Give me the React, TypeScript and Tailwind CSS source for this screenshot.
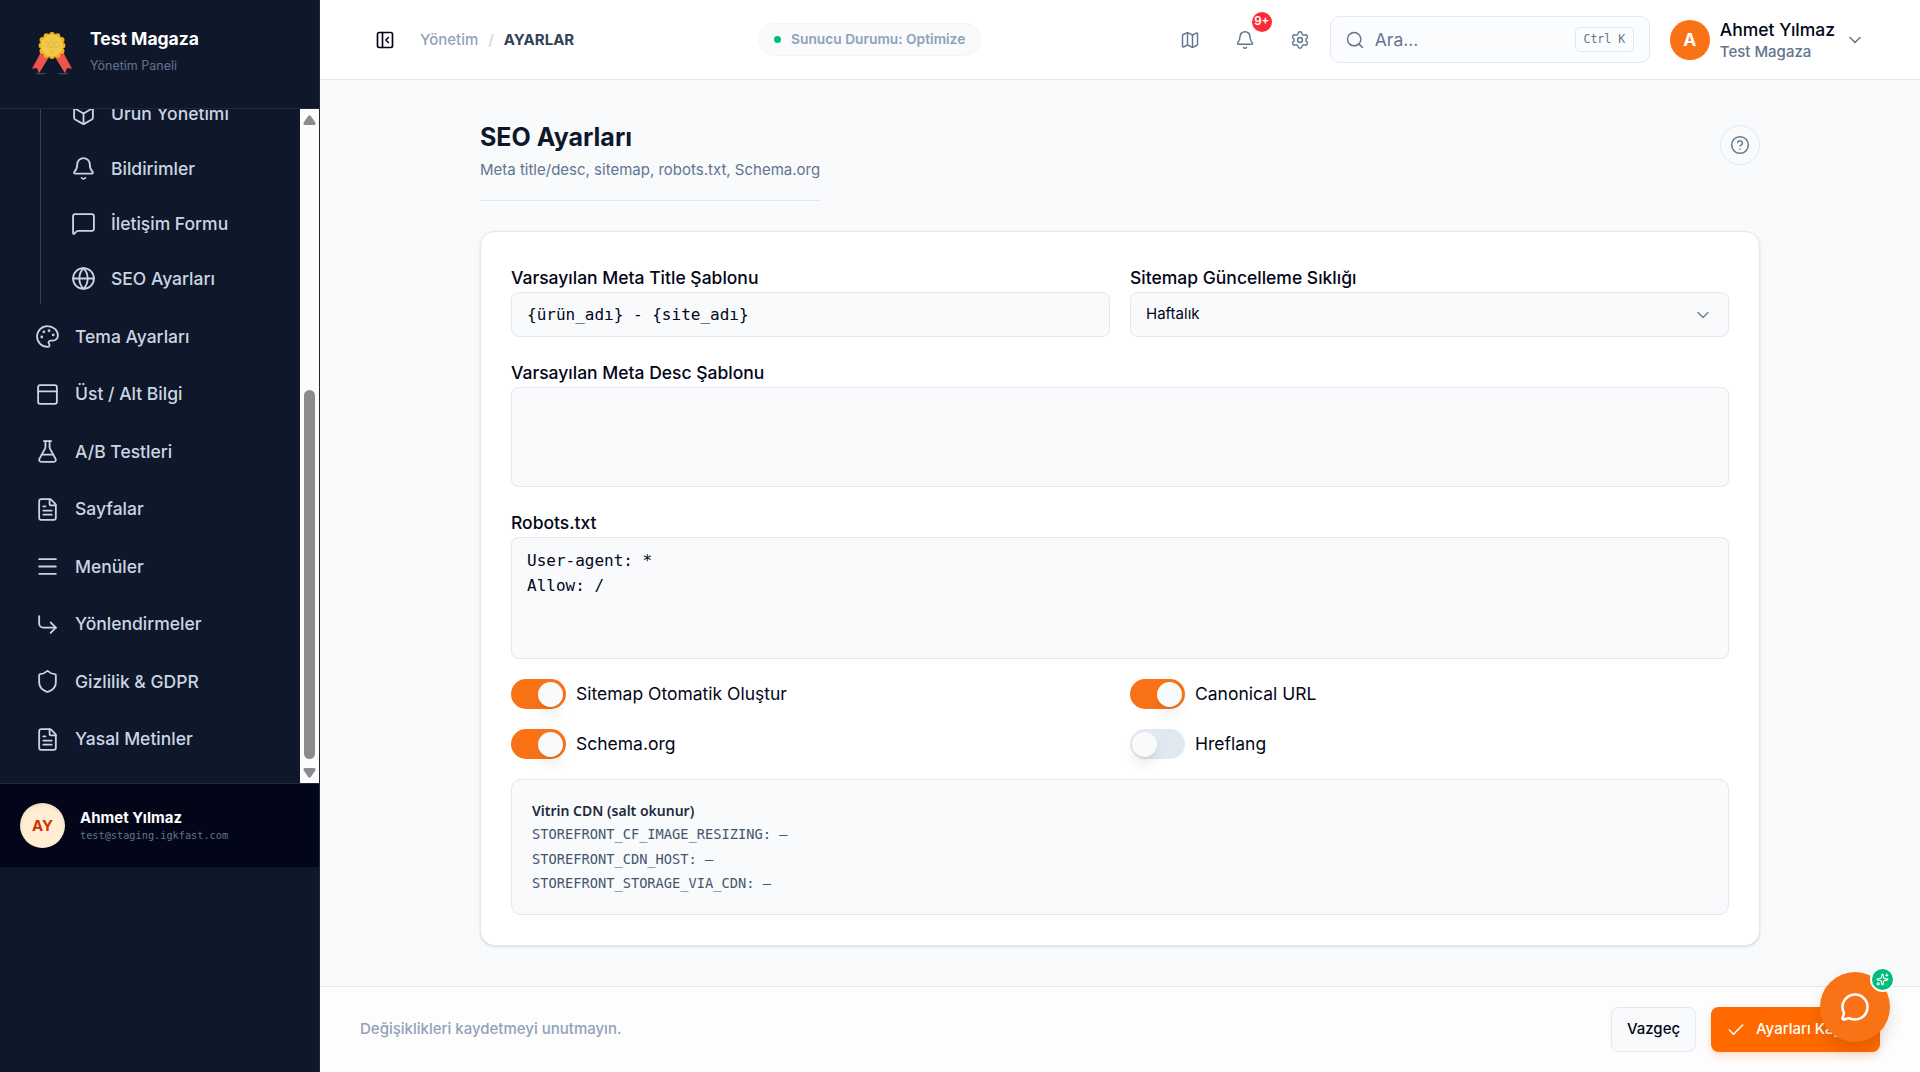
import {
  Bell,
  Box,
  Check,
  ChevronDown,
  CircleHelp,
  CornerDownRight,
  FileText,
  FlaskConical,
  Globe,
  Map,
  Menu,
  MessageCircle,
  MessageSquare,
  Palette,
  PanelLeftClose,
  PanelTop,
  Search,
  Settings,
  Shield,
  Sparkles,
  type LucideIcon,
} from "lucide-react";
import type { ReactNode } from "react";

interface NavItem {
  label: string;
  icon: LucideIcon;
}

const subItems: NavItem[] = [
  { label: "Ürün Yönetimi", icon: Box },
  { label: "Bildirimler", icon: Bell },
  { label: "İletişim Formu", icon: MessageSquare },
  { label: "SEO Ayarları", icon: Globe },
];

const mainItems: NavItem[] = [
  { label: "Tema Ayarları", icon: Palette },
  { label: "Üst / Alt Bilgi", icon: PanelTop },
  { label: "A/B Testleri", icon: FlaskConical },
  { label: "Sayfalar", icon: FileText },
  { label: "Menüler", icon: Menu },
  { label: "Yönlendirmeler", icon: CornerDownRight },
  { label: "Gizlilik & GDPR", icon: Shield },
  { label: "Yasal Metinler", icon: FileText },
];

const toggles = [
  { label: "Sitemap Otomatik Oluştur", on: true },
  { label: "Canonical URL", on: true },
  { label: "Schema.org", on: true },
  { label: "Hreflang", on: false },
];

const cdnVars = [
  "STOREFRONT_CF_IMAGE_RESIZING",
  "STOREFRONT_CDN_HOST",
  "STOREFRONT_STORAGE_VIA_CDN",
];

const StoreLogo = () => (
  <svg width="40" height="44" viewBox="0 0 40 44" className="-mt-[3px] shrink-0">
    <ellipse cx="9" cy="42.6" rx="6" ry="0.8" fill="#334155" />
    <ellipse cx="31" cy="42.6" rx="6" ry="0.8" fill="#334155" />
    <path d="M9 21L0 37.700L4.900 37L7 42.200L17 26Z" fill="#ef5350" />
    <path d="M31 21L40 37.700L35.100 37L33 42.200L23 26Z" fill="#ef5350" />
    <g fill="#eeb116">
      <circle cx="20" cy="14.500" r="11.400" />
      <circle cx="20" cy="4" r="2.900" />
      <circle cx="25.500" cy="5.200" r="2.900" />
      <circle cx="29.600" cy="9" r="2.900" />
      <circle cx="30.500" cy="14.500" r="2.900" />
      <circle cx="29.600" cy="20" r="2.900" />
      <circle cx="25.500" cy="23.900" r="2.900" />
      <circle cx="20" cy="25" r="2.900" />
      <circle cx="14.500" cy="23.900" r="2.900" />
      <circle cx="10.400" cy="20" r="2.900" />
      <circle cx="9.500" cy="14.500" r="2.900" />
      <circle cx="10.400" cy="9" r="2.900" />
      <circle cx="14.500" cy="5.200" r="2.900" />
    </g>
    <circle cx="20" cy="14.500" r="11" fill="#f2c84b" />
    <text x="20" y="17" textAnchor="middle" fontSize="9" fill="#e3b53c" fontFamily="Inter, sans-serif">
      100
    </text>
    <text x="20" y="24" textAnchor="middle" fontSize="6" fill="#e3b53c" fontFamily="Inter, sans-serif">
      %
    </text>
  </svg>
);

const Sidebar = () => (
  <aside className="flex w-80 shrink-0 flex-col border-r border-[#1d293d] bg-[#0f172a]">
    <div className="flex h-[109px] shrink-0 items-center border-b border-[#1d293d] pl-8">
      <StoreLogo />
      <div className="-mt-1.5 ml-[18px]">
        <p className="text-[17.5px] leading-6 font-bold text-white">Test Magaza</p>
        <p className="mt-[5px] text-[12.5px] leading-5 text-[#62748e]">Yönetim Paneli</p>
      </div>
    </div>

    <div className="flex h-[674px] shrink-0 overflow-hidden">
      <nav className="flex-1 text-[17.5px] font-medium text-[#cad5e2]">
        <div className="-mt-[20.5px] ml-10 flex flex-col gap-[5px] border-l border-[#314158] pl-[30px]">
          {subItems.map(({ label, icon: Icon }) => (
            <div key={label} className="flex h-[50px] items-center gap-[15px]">
              <Icon size={25} strokeWidth={1.75} />
              <span className="pt-0.5">{label}</span>
            </div>
          ))}
        </div>
        <div className="mt-[7px] flex flex-col gap-[5px] pl-[35px]">
          {mainItems.map(({ label, icon: Icon }) => (
            <div key={label} className="flex h-[52.5px] items-center gap-[15px]">
              <Icon size={25} strokeWidth={1.75} />
              <span>{label}</span>
            </div>
          ))}
        </div>
      </nav>

      {/* scrollbar track */}
      <div className="flex w-[19px] flex-col items-center bg-[#fcfcfc] pt-1.5 pb-[5px]">
        <svg width="13" height="10" viewBox="0 0 13 10" fill="#8b8b8b">
          <path d="M5.200 0.900Q6.500 -0.600 7.800 0.900L12.300 7.500Q13 10 11 10H2Q0 10 0.700 7.500Z" />
        </svg>
        <div className="mt-[265px] h-[369px] w-[11px] rounded-full bg-[#8b8b8b]" />
        <svg width="13" height="10" viewBox="0 0 13 10" fill="#8b8b8b" className="mt-[9px]">
          <path d="M5.200 9.100Q6.500 10.600 7.800 9.100L12.300 2.500Q13 0 11 0H2Q0 0 0.700 2.500Z" />
        </svg>
      </div>
    </div>

    <div className="flex h-[84px] shrink-0 items-center border-t border-[#1d293d] bg-[#020618] pl-5">
      <div className="flex h-[45px] w-[45px] items-center justify-center rounded-full bg-[#ffedd4] pt-0.5 text-[15px] font-bold text-[#ca3500] shadow-[inset_0_2px_4px_rgba(0,0,0,0.08)]">
        AY
      </div>
      <div className="ml-[15px]">
        <p className="text-[15px] leading-5 font-bold text-white">Ahmet Yılmaz</p>
        <p className="font-['DejaVu_Sans_Mono',monospace] text-[10.25px] leading-[15px] text-[#62748e]">
          test@staging.igkfast.com
        </p>
      </div>
    </div>
  </aside>
);

const Header = () => (
  <header className="flex h-20 shrink-0 items-center border-b border-[#e2e8f0] bg-white pr-[55px] pl-[55px]">
    <PanelLeftClose size={20} className="text-[#020618]" />
    <div className="ml-[25px] flex items-center pt-0.5 text-[15px] font-medium">
      <span className="text-[#90a1b9]">Yönetim</span>
      <span className="mx-2.5 text-[#cad5e2]">/</span>
      <span className="font-bold text-[#314158]">AYARLAR</span>
    </div>
    <div className="ml-[184px] flex h-[33px] w-[223px] items-center justify-center gap-2.5 rounded-full border border-[#f1f5f9] bg-[#f8fafc] text-[13.75px] font-semibold text-[#90a1b9]">
      <span className="h-[7px] w-[7px] rounded-full bg-[#00bc7d]" />
      Sunucu Durumu: Optimize
    </div>

    <div className="ml-auto flex items-center text-[#62748e]">
      <Map size={20} strokeWidth={1.75} />
      <div className="relative ml-[35px]">
        <Bell size={20} strokeWidth={1.75} />
        <span className="absolute -top-[18px] left-[17px] flex h-5 w-5 items-center justify-center rounded-full bg-[#fb2c36] text-[11.5px] font-semibold text-white">
          9+
        </span>
      </div>
      <Settings size={20} strokeWidth={1.75} className="ml-[35px]" />
      <div className="ml-5 flex h-[47px] w-80 items-center rounded-[10px] border border-[#e2e8f0] bg-[#fbfcfe] pr-[15px] pl-3.5">
        <Search size={20} strokeWidth={1.75} />
        <span className="ml-2.5 flex-1 pt-px text-[17.5px]">Ara...</span>
        <kbd className="flex h-[25px] w-[59px] items-center justify-center rounded-[5px] border border-[#e2e8f0] font-['DejaVu_Sans_Mono',monospace] text-[11.5px]">
          Ctrl K
        </kbd>
      </div>
      <div className="ml-5 flex h-10 w-10 items-center justify-center rounded-full bg-[#f97316] pt-px text-[17.5px] font-bold text-white">
        A
      </div>
      <div className="ml-2.5 pt-0.5">
        <p className="text-[17.5px] leading-[22px] font-medium text-[#020618]">Ahmet Yılmaz</p>
        <p className="text-[15px] leading-[22px] font-medium">Test Magaza</p>
      </div>
      <ChevronDown size={20} strokeWidth={1.75} className="ml-2.5" />
    </div>
  </header>
);

interface FieldProps {
  label: string;
  className?: string;
  children?: ReactNode;
}

const Field = ({ label, className = "", children }: FieldProps) => (
  <div>
    <label className="block h-[29px] text-[17.5px] leading-[29px] font-medium text-[#020618]">{label}</label>
    <div className={`rounded-[7.5px] border border-[#e2e8f0] bg-[#f8fafc] px-[15px] ${className}`}>
      {children}
    </div>
  </div>
);

const Toggle = ({ on }: { on: boolean }) => (
  <span
    className={`flex h-[30px] w-[55px] items-center rounded-full pr-[3px] pl-0.5 ${on ? "justify-end bg-[#f97316]" : "bg-[#e2e8f0]"}`}
  >
    <span className="h-[25px] w-[25px] rounded-full bg-[#f8fafc] shadow-[0_10px_15px_-3px_rgba(0,0,0,0.1),0_4px_6px_-4px_rgba(0,0,0,0.1)]" />
  </span>
);

const SeoForm = () => (
  <section className="mt-[30px] h-[715px] rounded-[15px] border border-[#e2e8f0] bg-white px-[30px] pt-[31px] shadow-[0_1px_3px_rgba(0,0,0,0.1),0_1px_2px_-1px_rgba(0,0,0,0.1)]">
    <div className="grid grid-cols-2 gap-5">
      <Field
        label="Varsayılan Meta Title Şablonu"
        className="flex h-[45px] items-center font-['DejaVu_Sans_Mono',monospace] text-[16px] text-[#020618]"
      >
        {"{ürün_adı} - {site_adı}"}
      </Field>
      <Field
        label="Sitemap Güncelleme Sıklığı"
        className="flex h-[45px] items-center justify-between text-[15px] text-[#020618]"
      >
        Haftalık
        <ChevronDown size={20} strokeWidth={1.75} className="text-[#7b7f89]" />
      </Field>
    </div>
    <div className="mt-[21px]">
      <Field label="Varsayılan Meta Desc Şablonu" className="h-[100px]" />
    </div>
    <div className="mt-[21px]">
      <Field
        label="Robots.txt"
        className="h-[122px] pt-[10px] font-['DejaVu_Sans_Mono',monospace] text-[16px] leading-[25px] text-[#020618]"
      >
        <p>User-agent: *</p>
        <p>Allow: /</p>
      </Field>
    </div>

    <div className="mt-5 grid grid-cols-2 gap-5">
      {toggles.map(({ label, on }) => (
        <div key={label} className="flex h-[30px] items-center gap-2.5 text-[17.5px] text-[#020618]">
          <Toggle on={on} />
          {label}
        </div>
      ))}
    </div>

    <div className="mt-5 h-[136px] rounded-[10px] border border-[#e2e8f0] bg-[#f8fafc] px-5 pt-5 text-[#45556c]">
      <p className="font-['Noto_Sans',sans-serif] text-[14px] leading-[22px] font-semibold text-[#1d293d]">
        Vitrin CDN (salt okunur)
      </p>
      {cdnVars.map((name) => (
        <p key={name} className="font-['DejaVu_Sans_Mono',monospace] text-[13.7px] leading-[24.5px]">
          {name}: —
        </p>
      ))}
    </div>
  </section>
);

const ActionBar = () => (
  <footer className="flex h-[86px] shrink-0 items-center border-t border-[#e2e8f0] bg-[#fdfdfe] pr-10 pl-10">
    <p className="flex-1 text-[15px] font-medium text-[#90a1b9]">Değişiklikleri kaydetmeyi unutmayın.</p>
    <button className="h-[45px] w-[85px] rounded-[7.5px] border border-[#e2e8f0] bg-[#f8fafc] text-[15px] font-medium text-[#020618]">
      Vazgeç
    </button>
    <button className="ml-[15px] flex h-[45px] w-[169px] items-center gap-2.5 rounded-[7.5px] bg-[#ff6900] pl-[15px] text-[15px] font-medium whitespace-nowrap text-white shadow-[0_4px_8px_rgba(255,105,0,0.2)]">
      <Check size={20} strokeWidth={1.75} className="shrink-0" />
      Ayarları Kaydet
    </button>
  </footer>
);

const ChatButton = () => (
  <div className="fixed right-[30px] bottom-[30px] flex h-[70px] w-[70px] items-center justify-center rounded-full bg-[#f97316] text-white shadow-[0_8px_16px_rgba(0,0,0,0.12)]">
    <MessageCircle size={30} />
    <span className="absolute -top-[5px] -right-[5px] flex h-[25px] w-[25px] items-center justify-center rounded-full border-[2.5px] border-white bg-[#00bc7d]">
      <Sparkles size={13} />
    </span>
  </div>
);

export default function App() {
  return (
    <div className="flex h-[1072px] w-[1920px] overflow-hidden bg-[#f8fafc] font-['Inter',sans-serif]">
      <Sidebar />
      <div className="flex flex-1 flex-col">
        <Header />
        <main className="flex-1 px-40 pt-10">
          <div className="flex items-start justify-between">
            <div className="h-[81px] border-b border-[#e2e8f0]">
              <h1 className="text-[25px] leading-[34px] font-bold text-[#0f172b]">SEO Ayarları</h1>
              <p className="mt-1 text-[15px] leading-6 text-[#62748e]">
                Meta title/desc, sitemap, robots.txt, Schema.org
              </p>
            </div>
            <button className="mt-[5px] flex h-10 w-10 items-center justify-center rounded-full border border-[#e2e8f0] text-[#62748e]">
              <CircleHelp size={20} strokeWidth={1.75} />
            </button>
          </div>
          <SeoForm />
        </main>
        <ActionBar />
      </div>
      <ChatButton />
    </div>
  );
}
